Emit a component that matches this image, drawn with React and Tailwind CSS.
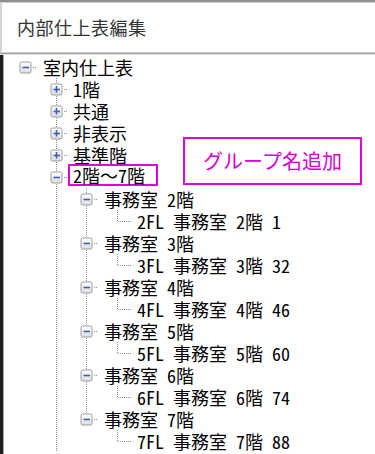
import React from 'react';

const FONT = { fontFamily: '"Noto Sans Mono CJK JP", "Noto Sans CJK JP", monospace' };
const UI_FONT = { fontFamily: '"Noto Sans CJK JP", "Noto Sans", sans-serif' };

// page x of the connector column for each tree level, and where the label text starts
const COL = [25, 56, 86, 117];
const TEXT_X = [43, 73, 104, 137];
const OFFSET = 4; // left border width of the tree panel
const ROW_H = 22;

const rows = [
  { label: '室内仕上表', level: 0, box: 'minus', lines: [] },
  { label: '1階', level: 1, box: 'plus', lines: [] },
  { label: '共通', level: 1, box: 'plus', lines: [] },
  { label: '非表示', level: 1, box: 'plus', lines: [] },
  { label: '基準階', level: 1, box: 'plus', lines: [] },
  { label: '2階～7階', level: 1, box: 'minus', lines: [], marked: true },
  { label: '事務室 2階', level: 2, box: 'minus', lines: [56] },
  { label: '2FL 事務室 2階 1', level: 3, lines: [56, 86], last: true },
  { label: '事務室 3階', level: 2, box: 'minus', lines: [56] },
  { label: '3FL 事務室 3階 32', level: 3, lines: [56, 86], last: true },
  { label: '事務室 4階', level: 2, box: 'minus', lines: [56] },
  { label: '4FL 事務室 4階 46', level: 3, lines: [56, 86], last: true },
  { label: '事務室 5階', level: 2, box: 'minus', lines: [56] },
  { label: '5FL 事務室 5階 60', level: 3, lines: [56, 86], last: true },
  { label: '事務室 6階', level: 2, box: 'minus', lines: [56] },
  { label: '6FL 事務室 6階 74', level: 3, lines: [56, 86], last: true },
  { label: '事務室 7階', level: 2, box: 'minus', lines: [56], last: true },
  { label: '7FL 事務室 7階 88', level: 3, lines: [56], last: true },
];

function Gutter({ row }) {
  const w = TEXT_X[row.level] - OFFSET - 5;
  const cx = COL[row.level] - OFFSET + 0.5;
  const cy = 11.5;
  const dot = { stroke: '#8c8c8c', strokeWidth: 1, strokeDasharray: '1 1' };

  return (
    <svg width={w} height={ROW_H} className="shrink-0" shapeRendering="crispEdges">
      <defs>
        <linearGradient id="boxfill" x1="0" y1="0" x2="0" y2="1">
          <stop offset="0" stopColor="#ffffff" />
          <stop offset="1" stopColor="#dcdcdc" />
        </linearGradient>
      </defs>
      {row.lines.map((x) => (
        <line key={x} x1={x - OFFSET + 0.5} y1={0} x2={x - OFFSET + 0.5} y2={ROW_H} {...dot} />
      ))}
      {row.level > 0 && (
        <line x1={cx} y1={0} x2={cx} y2={row.last ? cy : ROW_H} {...dot} />
      )}
      <line x1={row.box ? cx + 7 : cx} y1={cy} x2={w - 1} y2={cy} {...dot} />
      {row.box && (
        <g>
          <rect
            x={cx - 5.5}
            y={cy - 5.5}
            width={11}
            height={11}
            rx={1.5}
            fill="url(#boxfill)"
            stroke="#9c9c9c"
            shapeRendering="auto"
          />
          <line x1={cx - 3} y1={cy} x2={cx + 3.5} y2={cy} stroke="#3f5cb8" strokeWidth={1.6} shapeRendering="auto" />
          {row.box === 'plus' && (
            <line x1={cx} y1={cy - 3.5} x2={cx} y2={cy + 3} stroke="#3f5cb8" strokeWidth={1.6} shapeRendering="auto" />
          )}
        </g>
      )}
    </svg>
  );
}

function TreeRow({ row }) {
  return (
    <div className="flex h-[22px] items-center">
      <Gutter row={row} />
      <span
        className={`relative whitespace-pre border-2 pl-[3px] text-[18px] leading-[18px] text-black ${
          row.marked ? '-top-[2px] w-[90px] border-[#e000e0]' : 'border-transparent'
        }`}
        style={FONT}
      >
        {row.label}
      </span>
    </div>
  );
}

export default function App() {
  return (
    <div className="relative flex h-[454px] w-[375px] flex-col overflow-hidden bg-white">
      {/* window title */}
      <div className="h-[2px] bg-[#8f8f8f]" />
      <div className="h-[1px] bg-[#cfcfcf]" />
      <div className="flex h-[49px] items-center border-l-2 border-[#d6d6d6] pl-[15px]">
        <span className="text-[18px] tracking-[0.5px] text-[#333]" style={UI_FONT}>
          内部仕上表編集
        </span>
      </div>
      <div className="h-[1px] bg-[#d2d2d2]" />
      <div className="h-[1px] bg-[#9e9e9e]" />
      <div className="h-[1px] bg-[#e4e4e4]" />

      {/* tree */}
      <div className="flex flex-1 border-l-[3px] border-[#1e1e1e]">
        <div className="flex flex-1 flex-col border-l border-[#a8a8a8] pt-[1px]">
          {rows.map((row, i) => (
            <TreeRow key={i} row={row} />
          ))}
        </div>
      </div>

      {/* annotation */}
      <div
        className="absolute left-[183px] top-[137px] flex h-[48px] w-[179px] items-center justify-center border-2 border-[#e000e0] bg-white text-[20px] text-[#d400d4]"
        style={UI_FONT}
      >
        グループ名追加
      </div>
    </div>
  );
}
